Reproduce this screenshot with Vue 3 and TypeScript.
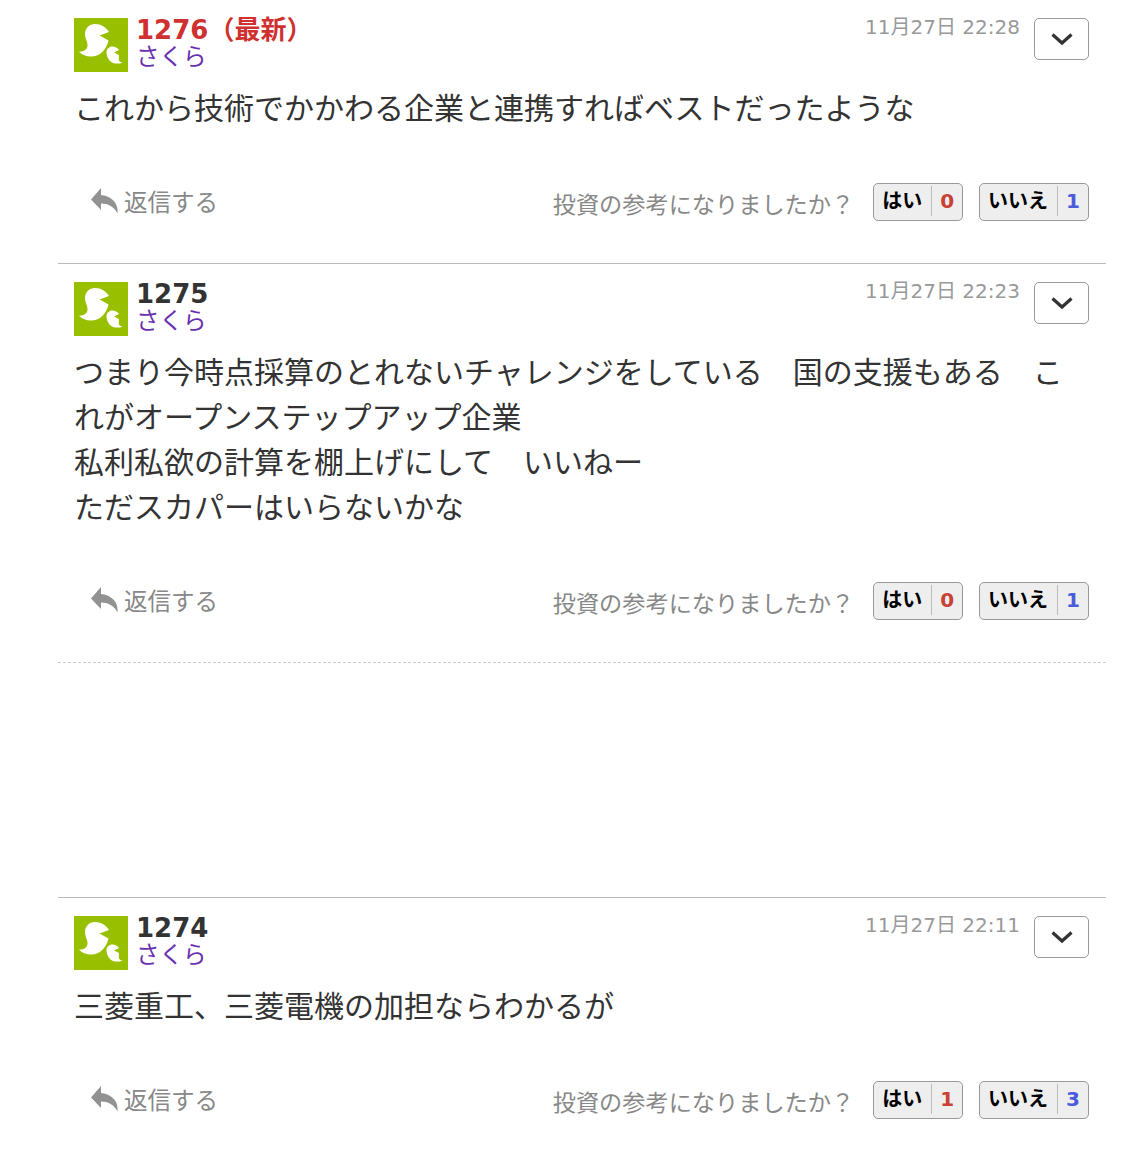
<template>
  <div class="board">
    <template v-for="post in posts" :key="post.no">
      <article :class="['post', { gap: post.adBelow, last: post.no === 1274 }]">
        <header class="head">
          <svg class="avatar" viewBox="0 0 54 54" width="54" height="54">
            <rect width="54" height="54" fill="#99c000" />
            <path
              d="M5 33.500C9 34 13 32 13.500 28C14 24 11 21 11 16C11 10 15.500 6 21 6C27 6 32 9 35 14L25.500 17.500L34.500 22.500C33 29 28 38 18 38.500C13 38.800 8 37 5 33.500Z"
              fill="#fff"
            />
            <path
              d="M49 44.500C47 44.800 45 43.500 44.800 41.500C44.700 40 45 38.500 45 37L40 34.500L45 32C43.500 29.800 41 28.500 38.500 28.500C35 28.500 32.500 31 32.500 34C32.500 39.500 36 45.500 42 45.500C44.500 45.500 47 45.500 49 44.500Z"
              fill="#fff"
            />
          </svg>
          <div class="who">
            <div :class="['no', { latest: post.latest }]">{{ post.no }}<span v-if="post.latest" class="mark">（最新）</span></div>
            <a class="name">さくら</a>
          </div>
          <time class="date">{{ post.date }}</time>
          <button class="more" type="button">
            <svg viewBox="0 0 24 14" width="24" height="14">
              <path d="M2.500 2.500 12 11l9.500-8.500" fill="none" stroke="#333" stroke-width="3.200" />
            </svg>
          </button>
        </header>
        <p class="body">
          <template v-for="(line, i) in post.lines" :key="i">{{ line }}<br v-if="i < post.lines.length - 1" /></template>
        </p>
        <footer class="foot">
          <a class="reply">
            <svg viewBox="0 0 28 26" width="28" height="26">
              <path
                d="M10 0 0 11.500 10 22v-6.500c7 0 13 3 16.500 10 1-9-4-17-16.500-18.500z"
                fill="#929292"
              />
            </svg>
            <span>返信する</span>
          </a>
          <span class="ask">投資の参考になりましたか？</span>
          <button class="vote" type="button">
            <b>はい</b><i class="yes">{{ post.yes }}</i>
          </button>
          <button class="vote" type="button">
            <b>いいえ</b><i class="no-count">{{ post.no_ }}</i>
          </button>
        </footer>
      </article>
      <div v-if="post.adBelow" class="ad-space"></div>
    </template>
  </div>
</template>

<script setup lang="ts">
interface Post {
  no: number
  latest?: boolean
  date: string
  lines: string[]
  yes: number
  no_: number
  adBelow?: boolean
}

const posts: Post[] = [
  {
    no: 1276,
    latest: true,
    date: '11月27日 22:28',
    lines: ['これから技術でかかわる企業と連携すればベストだったような'],
    yes: 0,
    no_: 1
  },
  {
    no: 1275,
    date: '11月27日 22:23',
    lines: [
      'つまり今時点採算のとれないチャレンジをしている　国の支援もある　これがオープンステップアップ企業',
      '私利私欲の計算を棚上げにして　いいねー',
      'ただスカパーはいらないかな'
    ],
    yes: 0,
    no_: 1,
    adBelow: true
  },
  {
    no: 1274,
    date: '11月27日 22:11',
    lines: ['三菱重工、三菱電機の加担ならわかるが'],
    yes: 1,
    no_: 3
  }
]
</script>

<style>
html,
body {
  margin: 0;
  background: #fff;
}
</style>

<style scoped>
.board {
  width: 1048px;
  margin-left: 58px;
  font-family: 'DejaVu Sans', 'Noto Sans CJK JP', sans-serif;
  color: #333;
}

.post {
  padding: 18px 17px 42px 16px;
  border-bottom: 1px solid #bbb;
}

.post.gap {
  border-bottom: 1px dashed #ccc;
}

.post.last {
  border-bottom: 0;
}

.ad-space {
  height: 234px;
  border-bottom: 1px solid #bbb;
}

.head {
  display: flex;
  align-items: flex-start;
}

.avatar {
  flex: none;
  display: block;
}

.who {
  margin-left: 8px;
  flex: 1;
}

.no {
  font-size: 26px;
  font-weight: 700;
  line-height: 26px;
  margin-top: -1px;
  color: #333;
}

.no.latest {
  color: #cf3030;
}

.mark {
  font-size: 26px;
}

.name {
  display: block;
  font-size: 23.500px;
  line-height: 29px;
  color: #6a2fb0;
}

.date {
  font-size: 20px;
  line-height: 20px;
  margin-top: -1px;
  color: #999;
}

.more {
  flex: none;
  width: 55px;
  height: 42px;
  margin-left: 14px;
  padding: 0;
  display: flex;
  align-items: center;
  justify-content: center;
  background: #fff;
  border: 1px solid #999;
  border-radius: 5px;
}

.body {
  margin: 14px 0 0;
  font-size: 30px;
  line-height: 45px;
  color: #333;
}

.foot {
  display: flex;
  align-items: center;
  margin-top: 52px;
}

.reply {
  display: flex;
  align-items: center;
  gap: 5px;
  margin-left: 17px;
  margin-top: -3px;
  margin-right: auto;
  font-size: 23.500px;
  color: #888;
}

.ask {
  font-size: 23.200px;
  line-height: 30px;
  margin-top: 5px;
  color: #888;
}

.vote {
  display: flex;
  align-items: center;
  height: 38px;
  margin-left: 19px;
  padding: 0 8px 2px;
  font-family: inherit;
  background: #eee;
  border: 1px solid #999;
  border-radius: 5px;
}

.vote + .vote {
  margin-left: 16px;
}

.vote b {
  font-size: 20px;
  color: #000;
  padding-right: 9px;
  border-right: 1px solid #bbb;
  line-height: 30px;
}

.vote i {
  font-style: normal;
  font-weight: 700;
  font-size: 20px;
  line-height: 30px;
  padding-left: 8px;
}

.yes {
  color: #c94035;
}

.no-count {
  color: #4a5bdc;
}
</style>
